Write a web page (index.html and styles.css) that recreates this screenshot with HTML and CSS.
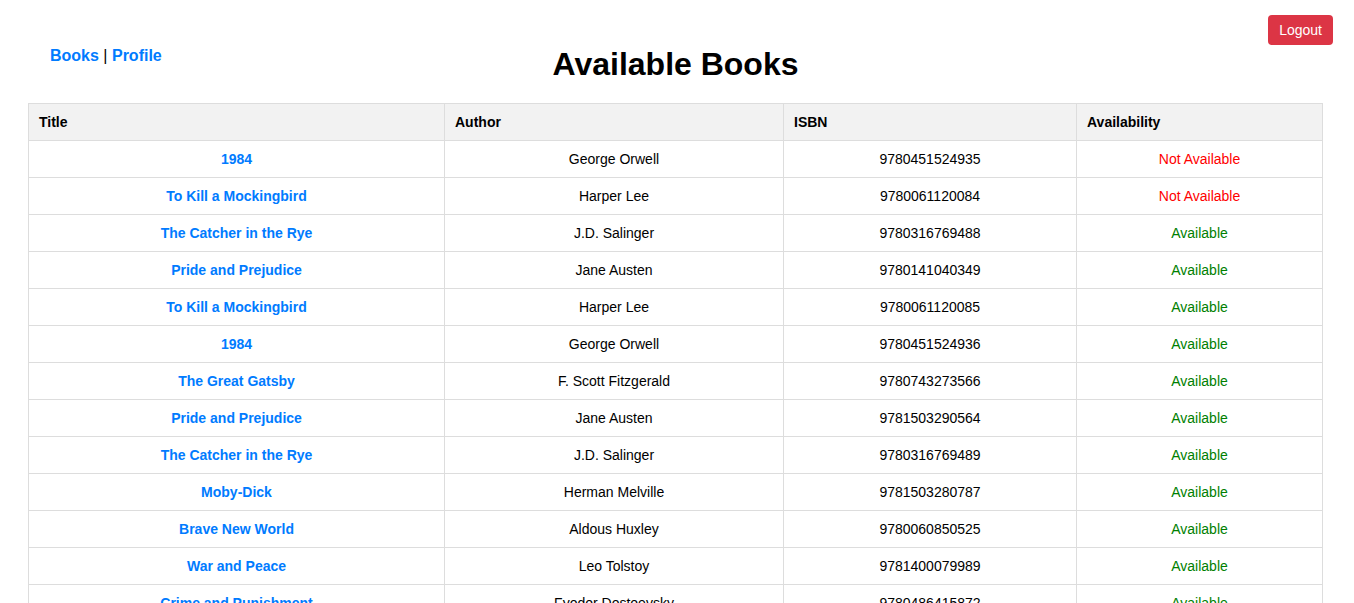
FILE: index.html
```html
<!DOCTYPE html>
<html lang="en">
<head>
<meta charset="utf-8">
<title>Available Books</title>
<link rel="stylesheet" href="styles.css">
</head>
<body>
  <div class="topbar">
    <button class="logout" type="button">Logout</button>
  </div>
  <header class="header">
    <nav class="nav"><a href="#">Books</a> | <a href="#">Profile</a></nav>
    <h1 class="page-title">Available Books</h1>
    <div></div>
  </header>
  <main class="content">
    <table class="books">
      <colgroup>
        <col class="col-title">
        <col class="col-author">
        <col class="col-isbn">
        <col class="col-avail">
      </colgroup>
      <thead>
        <tr><th>Title</th><th>Author</th><th>ISBN</th><th>Availability</th></tr>
      </thead>
      <tbody>
        <tr><td><a href="#">1984</a></td><td>George Orwell</td><td>9780451524935</td><td class="no">Not Available</td></tr>
        <tr><td><a href="#">To Kill a Mockingbird</a></td><td>Harper Lee</td><td>9780061120084</td><td class="no">Not Available</td></tr>
        <tr><td><a href="#">The Catcher in the Rye</a></td><td>J.D. Salinger</td><td>9780316769488</td><td class="yes">Available</td></tr>
        <tr><td><a href="#">Pride and Prejudice</a></td><td>Jane Austen</td><td>9780141040349</td><td class="yes">Available</td></tr>
        <tr><td><a href="#">To Kill a Mockingbird</a></td><td>Harper Lee</td><td>9780061120085</td><td class="yes">Available</td></tr>
        <tr><td><a href="#">1984</a></td><td>George Orwell</td><td>9780451524936</td><td class="yes">Available</td></tr>
        <tr><td><a href="#">The Great Gatsby</a></td><td>F. Scott Fitzgerald</td><td>9780743273566</td><td class="yes">Available</td></tr>
        <tr><td><a href="#">Pride and Prejudice</a></td><td>Jane Austen</td><td>9781503290564</td><td class="yes">Available</td></tr>
        <tr><td><a href="#">The Catcher in the Rye</a></td><td>J.D. Salinger</td><td>9780316769489</td><td class="yes">Available</td></tr>
        <tr><td><a href="#">Moby-Dick</a></td><td>Herman Melville</td><td>9781503280787</td><td class="yes">Available</td></tr>
        <tr><td><a href="#">Brave New World</a></td><td>Aldous Huxley</td><td>9780060850525</td><td class="yes">Available</td></tr>
        <tr><td><a href="#">War and Peace</a></td><td>Leo Tolstoy</td><td>9781400079989</td><td class="yes">Available</td></tr>
        <tr><td><a href="#">Crime and Punishment</a></td><td>Fyodor Dostoevsky</td><td>9780486415872</td><td class="yes">Available</td></tr>
      </tbody>
    </table>
  </main>
</body>
</html>
```

FILE: styles.css
```css
html, body {
  overflow: hidden;
}
body {
  margin: 8px;
  font-family: "Liberation Sans", Arial, sans-serif;
  color: #000;
  background: #fff;
}
.topbar {
  display: flex;
  justify-content: flex-end;
  padding-top: 7px;
  padding-right: 13px;
}
.logout {
  font-family: "Liberation Sans", Arial, sans-serif;
  font-size: 14px;
  line-height: 16px;
  color: #fff;
  background: #dc3545;
  border: none;
  border-radius: 4px;
  padding: 7px 11px;
  cursor: pointer;
}
.header {
  display: grid;
  grid-template-columns: 1fr auto 1fr;
  align-items: start;
  margin-top: 1px;
  padding-right: 3px;
}
.nav {
  padding-left: 42px;
  padding-top: 1px;
  font-size: 16px;
  line-height: 18px;
}
.nav a {
  color: #007bff;
  font-weight: bold;
  text-decoration: none;
}
.page-title {
  margin: 0;
  font-size: 32px;
  line-height: 37px;
  font-weight: bold;
  text-align: center;
}
.content {
  padding: 20px 20px 0 20px;
}
.books {
  width: 1294px;
  border-collapse: collapse;
  table-layout: fixed;
  font-size: 14px;
}
.col-title { width: 416px; }
.col-author { width: 339px; }
.col-isbn { width: 293px; }
.col-avail { width: 246px; }
.books th,
.books td {
  border: 1px solid #ddd;
  padding: 10px;
  line-height: 16px;
}
.books th {
  background: #f2f2f2;
  text-align: left;
  font-weight: bold;
}
.books td {
  text-align: center;
}
.books td a {
  color: #007bff;
  font-weight: bold;
  text-decoration: none;
}
.books td.no {
  color: #ff0000;
}
.books td.yes {
  color: #008000;
}
```
